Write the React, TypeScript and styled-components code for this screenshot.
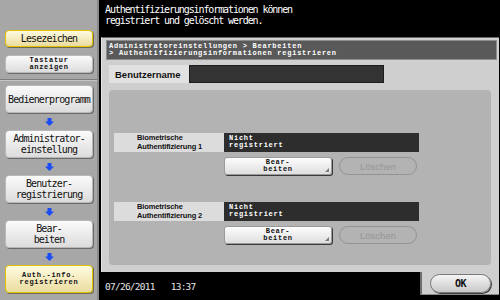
import React from "react";
import styled, { createGlobalStyle, css } from "styled-components";

const GlobalStyle = createGlobalStyle`
  html, body { margin: 0; padding: 0; background: #000; }
  body { width: 500px; height: 300px; overflow: hidden; font-family: "Liberation Sans", Arial, sans-serif; }
  * { box-sizing: border-box; }
`;

const mono = css`
  font-family: "Liberation Mono", "DejaVu Sans Mono", monospace;
`;

const bigMono = css`
  font-family: "DejaVu Sans Mono", "Liberation Mono", monospace;
`;

const Screen = styled.div`
  display: flex;
  width: 500px;
  height: 300px;
  background: #000;
`;

const Sidebar = styled.div`
  width: 99px;
  display: flex;
  flex-direction: column;
  background: #a7a7a7;
  border-right: 2px solid #8a8a8a;
`;

const SideTop = styled.div`
  height: 80px;
  padding: 30px 0 0 5px;
  display: flex;
  flex-direction: column;
  gap: 8px;
  border-bottom: 1px solid #7c7c7c;
  box-shadow: 0 1px 0 #c4c4c4;
`;

const SideFlow = styled.div`
  padding: 5px 0 0 5px;
  display: flex;
  flex-direction: column;
`;

const SideButton = styled.div<{ $yellow?: boolean; $h: number; $small?: boolean }>`
  width: 88px;
  height: ${(p) => p.$h}px;
  border-radius: 4px;
  display: flex;
  align-items: center;
  justify-content: center;
  text-align: center;
  color: #111;
  ${(p) =>
    p.$small
      ? css`
          ${mono};
          font-size: 7px;
          font-weight: bold;
          line-height: 7px;
          letter-spacing: 0.7px;
        `
      : css`
          ${bigMono};
          font-size: 10px;
          line-height: 11px;
          letter-spacing: -0.9px;
        `}
  ${(p) =>
    p.$yellow
      ? css`
          background: linear-gradient(#fffbe2, #eadc9e);
          border: 1.5px solid #e3c200;
          box-shadow: 1px 1px 0 #6e6a50;
        `
      : css`
          background: linear-gradient(#fbfbfb, #dcdcdc);
          border: 1px solid #b8b8b8;
          box-shadow: 1px 1px 0 #6a6a6a;
        `}
`;

const ArrowSlot = styled.div`
  width: 88px;
  height: 17px;
  display: flex;
  align-items: center;
  justify-content: center;
`;

const Main = styled.div`
  flex: 1;
  display: flex;
  flex-direction: column;
`;

const Message = styled.div`
  height: 37px;
  padding: 4px 0 0 6px;
  color: #fff;
  ${bigMono};
  font-size: 10px;
  line-height: 11px;
  letter-spacing: -1.1px;
`;

const Frame = styled.div`
  flex: 1;
  margin: 0 1px 0 2px;
  background: #cfcfcf;
  border-top: 1px solid #6a6a6a;
  border-left: 1px solid #e2e2e2;
  padding: 2px 2px 0 4px;
  display: flex;
  flex-direction: column;
`;

const Crumb = styled.div`
  height: 20px;
  background: #595959;
  border: 1px solid #8d8d8d;
  color: #fff;
  padding: 2px 0 0 2px;
  ${mono};
  font-weight: bold;
  font-size: 7px;
  line-height: 7px;
  letter-spacing: 0.75px;
  white-space: pre;
`;

const Body = styled.div`
  flex: 1;
  padding: 5px 6px 7px 3px;
  display: flex;
  flex-direction: column;
`;

const UserRow = styled.div`
  display: flex;
  height: 18px;
`;

const UserLabel = styled.div`
  width: 80px;
  background: #e1e1e1;
  font-weight: bold;
  font-size: 9.5px;
  color: #111;
  display: flex;
  align-items: center;
  padding-left: 6px;
`;

const UserField = styled.div`
  width: 195px;
  background: #333;
  border: 1px solid #1c1c1c;
`;

const InnerBox = styled.div`
  flex: 1;
  margin-top: 7px;
  background: #b3b3b3;
  border-radius: 4px;
  padding: 43px 0 0 5px;
  display: flex;
  flex-direction: column;
`;

const BioBlock = styled.div<{ $gap: number }>`
  margin-top: ${(p) => p.$gap}px;
  display: flex;
  flex-direction: column;
  gap: 5px;
`;

const BioRow = styled.div`
  display: flex;
  height: 19px;
`;

const BioLabel = styled.div`
  width: 110px;
  background: #dcdcdc;
  padding: 1px 0 0 23px;
  font-weight: bold;
  font-size: 7.5px;
  line-height: 8.5px;
  letter-spacing: -0.15px;
  color: #111;
`;

const BioField = styled.div`
  width: 195px;
  background: #2d2d2d;
  color: #fff;
  padding: 2px 0 0 5px;
  ${mono};
  font-weight: bold;
  font-size: 7px;
  line-height: 7px;
  letter-spacing: 0.75px;
`;

const ButtonRow = styled.div`
  display: flex;
  gap: 7px;
  padding-left: 110px;
`;

const EditButton = styled.div`
  position: relative;
  width: 108px;
  height: 18px;
  border-radius: 3px;
  background: linear-gradient(#fdfdfd, #dedede);
  border: 1px solid #9a9a9a;
  box-shadow: 1px 1px 0 #3a3a3a;
  display: flex;
  align-items: center;
  justify-content: center;
  text-align: center;
  color: #111;
  ${mono};
  font-weight: bold;
  font-size: 7px;
  line-height: 7px;
  letter-spacing: 0.7px;
`;

const Corner = styled.span`
  position: absolute;
  right: 2px;
  bottom: 2px;
  width: 0;
  height: 0;
  border-left: 4px solid transparent;
  border-bottom: 4px solid #7a7a7a;
`;

const DeleteButton = styled.div`
  width: 78px;
  height: 18px;
  border-radius: 10px;
  border: 1.5px solid #939393;
  color: #959595;
  font-size: 9.5px;
  display: flex;
  align-items: center;
  justify-content: center;
`;

const BottomRow = styled.div`
  height: 28px;
  display: flex;
`;

const DateBar = styled.div`
  flex: 1;
  display: flex;
  gap: 16px;
  padding: 9px 0 0 6px;
  color: #e6e6e6;
  ${bigMono};
  font-size: 9.5px;
  letter-spacing: -0.75px;
`;

const OkTab = styled.div`
  width: 79px;
  height: 23px;
  margin-right: 1px;
  background: #cfcfcf;
  border-left: 2px solid #6e6e6e;
  border-bottom: 1px solid #8a8a8a;
  padding: 2px 8px 0 8px;
`;

const OkButton = styled.div`
  height: 19px;
  border-radius: 10px;
  background: linear-gradient(#f4f4f4, #c9c9c9);
  border: 1px solid #7a7a7a;
  box-shadow: 1px 1px 0 #3c3c3c;
  display: flex;
  align-items: center;
  justify-content: center;
  color: #111;
  ${bigMono};
  font-weight: bold;
  font-size: 10px;
  letter-spacing: -0.5px;
`;

const Arrow = () => (
  <ArrowSlot>
    <svg width="9" height="8" viewBox="0 0 9 8">
      <path d="M2.5 0H6.5V3.5H9L4.5 8L0 3.5H2.5Z" fill="#1c4cf5" />
    </svg>
  </ArrowSlot>
);

const Bio = ({ n, gap }: { n: number; gap: number }) => (
  <BioBlock $gap={gap}>
    <BioRow>
      <BioLabel>
        Biometrische
        <br />
        Authentifizierung {n}
      </BioLabel>
      <BioField>
        Nicht
        <br />
        registriert
      </BioField>
    </BioRow>
    <ButtonRow>
      <EditButton>
        Bear-
        <br />
        beiten
        <Corner />
      </EditButton>
      <DeleteButton>Löschen</DeleteButton>
    </ButtonRow>
  </BioBlock>
);

export default function App() {
  return (
    <>
      <GlobalStyle />
      <Screen>
        <Sidebar>
          <SideTop>
            <SideButton $yellow $h={17}>Lesezeichen</SideButton>
            <SideButton $small $h={18}>
              Tastatur
              <br />
              anzeigen
            </SideButton>
          </SideTop>
          <SideFlow>
            <SideButton $h={28}>Bedienerprogramm</SideButton>
            <Arrow />
            <SideButton $h={28}>
              Administrator-
              <br />
              einstellung
            </SideButton>
            <Arrow />
            <SideButton $h={28}>
              Benutzer-
              <br />
              registrierung
            </SideButton>
            <Arrow />
            <SideButton $h={28}>
              Bear-
              <br />
              beiten
            </SideButton>
            <Arrow />
            <SideButton $yellow $small $h={28}>
              Auth.-info.
              <br />
              registrieren
            </SideButton>
          </SideFlow>
        </Sidebar>
        <Main>
          <Message>
            Authentifizierungsinformationen können
            <br />
            registriert und gelöscht werden.
          </Message>
          <Frame>
            <Crumb>
              {"Administratoreinstellungen > Bearbeiten\n> Authentifizierungsinformationen registrieren"}
            </Crumb>
            <Body>
              <UserRow>
                <UserLabel>Benutzername</UserLabel>
                <UserField />
              </UserRow>
              <InnerBox>
                <Bio n={1} gap={0} />
                <Bio n={2} gap={27} />
              </InnerBox>
            </Body>
          </Frame>
          <BottomRow>
            <DateBar>
              <span>07/26/2011</span>
              <span>13:37</span>
            </DateBar>
            <OkTab>
              <OkButton>OK</OkButton>
            </OkTab>
          </BottomRow>
        </Main>
      </Screen>
    </>
  );
}
